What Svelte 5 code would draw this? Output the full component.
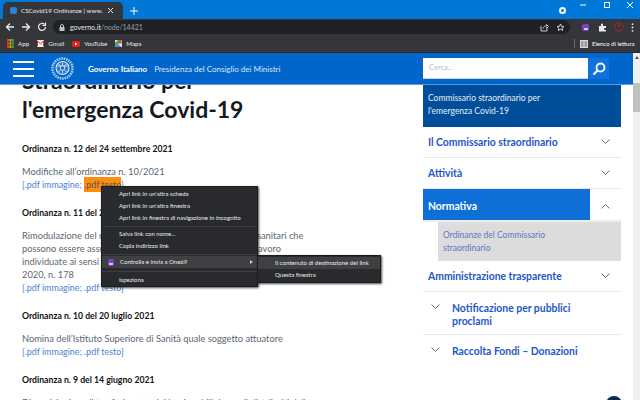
<script>
  const bookmarks = [
    { label: 'App', kind: 'apps' },
    { label: 'Gmail', kind: 'gmail' },
    { label: 'YouTube', kind: 'yt' },
    { label: 'Maps', kind: 'maps' }
  ];

  const orders = [
    {
      title: 'Ordinanza n. 12 del 24 settembre 2021',
      lines: ['Modifiche all\u2019ordinanza n. 10/2021'],
      highlight: true
    },
    {
      title: 'Ordinanza n. 11 del 2 agosto 2021',
      lines: [
        'Rimodulazione del numero massimo degli operatori socio-sanitari che',
        'possono essere assunti con contratti di somministrazione lavoro',
        'individuate ai sensi dell\u2019articolo 1 della legge 30 dicembre',
        '2020, n. 178'
      ]
    },
    {
      title: 'Ordinanza n. 10 del 20 luglio 2021',
      lines: ['Nomina dell\u2019Istituto Superiore di Sanità quale soggetto attuatore']
    },
    {
      title: 'Ordinanza n. 9 del 14 giugno 2021',
      lines: ['Disposizioni per il trasferimento dei beni mobili durevoli distribuiti dalla']
    }
  ];
</script>

<div class="window">
  <div class="tabstrip">
    <div class="tab">
      <span class="favicon"></span>
      <span class="tab-title">CSCovid19 Ordinanze | www.gov</span>
      <svg class="tab-x" width="7" height="7" viewBox="0 0 7 7"><path d="M1 1l5 5M6 1L1 6" stroke="#e8eaed" stroke-width="1" /></svg>
    </div>
    <svg class="newtab" width="8" height="8" viewBox="0 0 8 8"><path d="M4 0v8M0 4h8" stroke="#fff" stroke-width="1" /></svg>
    <div class="spacer"></div>
    <span class="record"></span>
    <div class="winctl">
      <svg width="10" height="10" viewBox="0 0 10 10"><path d="M1 5h6" stroke="#fff" /></svg>
      <svg width="10" height="10" viewBox="0 0 10 10"><rect x="2.500" y="2.500" width="5" height="5" fill="none" stroke="#fff" /></svg>
      <svg width="10" height="10" viewBox="0 0 10 10"><path d="M2 2l6 6M8 2l-6 6" stroke="#fff" /></svg>
    </div>
  </div>

  <div class="toolbar">
    <svg class="nav" width="10" height="10" viewBox="0 0 10 10"><path d="M9 5H1.500M5 1.500L1.500 5 5 8.500" fill="none" stroke="#e8eaed" stroke-width="1.300" /></svg>
    <svg class="nav" width="10" height="10" viewBox="0 0 10 10"><path d="M1 5h7.500M5 1.500L8.500 5 5 8.500" fill="none" stroke="#e8eaed" stroke-width="1.300" /></svg>
    <svg class="nav" width="10" height="10" viewBox="0 0 10 10"><path d="M8.500 5A3.500 3.500 0 1 1 7.500 2.500M8.500 0.500v3h-3" fill="none" stroke="#e8eaed" stroke-width="1.200" /></svg>
    <div class="omnibox">
      <svg width="6" height="7" viewBox="0 0 6 7"><rect x="0.500" y="3" width="5" height="4" fill="#bdc1c6" /><path d="M1.500 3V2a1.500 1.500 0 0 1 3 0v1" fill="none" stroke="#bdc1c6" /></svg>
      <span class="url"><b>governo.it</b>/node/14421</span>
      <div class="spacer"></div>
      <svg class="share" width="9" height="9" viewBox="0 0 9 9"><path d="M1 3v5h6V5.500M3 5.500C3.500 3.500 5 3 6.500 3V1.500L8.500 3.500 6.500 5.500V4.300" fill="none" stroke="#dadce0" stroke-width="0.900" /></svg>
      <svg width="9" height="9" viewBox="0 0 9 9"><path d="M4.500 1l1 2.300 2.500.2-1.900 1.600.6 2.400-2.200-1.300-2.200 1.300.6-2.400L1 3.500l2.500-.2z" fill="none" stroke="#dadce0" stroke-width="0.900" /></svg>
    </div>
    <span class="ext-one"><i></i></span>
    <svg width="9" height="9" viewBox="0 0 9 9"><path d="M1 3h2V1.500a1 1 0 0 1 2 0V3h3v2H7a1 1 0 0 0 0 2h1v1.500H1z" fill="#e8eaed" /></svg>
    <svg class="ring" width="10" height="10" viewBox="0 0 10 10"><circle cx="5" cy="5" r="4.200" fill="none" stroke="#a8242a" stroke-width="1" /><path d="M5 2.200V5" stroke="#c4363a" stroke-width="1" /></svg>
    <svg class="dots" width="3" height="9" viewBox="0 0 3 9"><circle cx="1.500" cy="1.200" r="0.900" fill="#e8eaed" /><circle cx="1.500" cy="4.500" r="0.900" fill="#e8eaed" /><circle cx="1.500" cy="7.800" r="0.900" fill="#e8eaed" /></svg>
  </div>

  <div class="bookmarks">
    {#each bookmarks as b}
      <span class="bookmark">
        {#if b.kind === 'apps'}
          <svg width="7" height="9" viewBox="0 0 7 9">
            <rect width="2" height="9" fill="#d9432f" />
            <rect x="2.500" width="2" height="9" fill="#e0a800" />
            <rect x="5" width="2" height="9" fill="#2f9e4f" />
            <path d="M0 3h7M0 6h7" stroke="#35363a" stroke-width="0.600" />
          </svg>
        {:else if b.kind === 'gmail'}
          <svg width="7" height="7" viewBox="0 0 7 7"><rect width="7" height="7" fill="#f1f1f1" /><path d="M.500 1v5.500M6.500 1v5.500M.500 1l3 2.800 3-2.800" fill="none" stroke="#d93025" /></svg>
        {:else if b.kind === 'yt'}
          <svg width="8" height="6" viewBox="0 0 8 6"><rect width="8" height="6" rx="1.600" fill="#e8201c" /><path d="M3 1.500v3L5.500 3z" fill="#fff" /></svg>
        {:else}
          <svg width="7" height="7" viewBox="0 0 7 7"><rect width="7" height="7" fill="#e9e4d8" /><path d="M0 7L7 0H3L0 3z" fill="#34a853" /><path d="M0 7l3-3 3 3z" fill="#4285f4" /><circle cx="5" cy="2" r="1.700" fill="#ea4335" /></svg>
        {/if}
        {b.label}
      </span>
    {/each}
    <div class="spacer"></div>
    <span class="bm-sep"></span>
    <span class="reading">
      <svg width="8" height="8" viewBox="0 0 8 8"><rect width="8" height="8" fill="#dadce0" /><path d="M1 2h2.500M1 4h2.500M1 6h2.500M4.500 2H7M4.500 4H7M4.500 6H7" stroke="#333" stroke-width="0.800" /></svg>
      Elenco di lettura
    </span>
  </div>

  <div class="page">
    <div class="site-head">
      <div class="burger"><i></i><i></i><i></i></div>
      <svg class="emblem" width="23" height="25" viewBox="0 0 23 25">
        <circle cx="11.500" cy="12.500" r="10" fill="none" stroke="#a9c8ee" stroke-width="2.600" stroke-dasharray="1.600 .8" />
        <circle cx="11.500" cy="12" r="6.500" fill="#2a78d2" stroke="#e3edf9" stroke-width="1.100" />
        <path d="M11.500 6.500v11M6 10h11M7.500 16l8-8M15.500 16l-8-8" stroke="#cfe0f5" stroke-width="0.900" />
        <circle cx="11.500" cy="12" r="2.200" fill="#1c69c6" stroke="#eef4fb" stroke-width="0.800" />
      </svg>
      <span class="gov"><b>Governo Italiano</b>Presidenza del Consiglio dei Ministri</span>
      <div class="spacer"></div>
      <div class="search">Cerca...</div>
      <div class="search-btn">
        <svg width="14" height="14" viewBox="0 0 14 14"><circle cx="8.500" cy="5.500" r="4" fill="none" stroke="#fff" stroke-width="1.800" /><path d="M5.500 8.500L1.500 12.500" stroke="#fff" stroke-width="2.200" /></svg>
      </div>
    </div>

    <div class="body">
      <main class="content">
        <h1>Straordinario per<br />l'emergenza Covid-19</h1>
        {#each orders as o}
          <section>
            <h2>{o.title}</h2>
            <p>
              {#each o.lines as line}{line}<br />{/each}
              <a href="#top">[.pdf immagine; <span class:hit={o.highlight}>.pdf testo</span>]</a>
            </p>
          </section>
        {/each}
      </main>

      <aside class="side">
        <div class="side-title">Commissario straordinario per<br />l'emergenza Covid-19</div>
        <div class="row"><span>Il Commissario straordinario</span><svg class="chev" width="9" height="6" viewBox="0 0 9 6"><path d="M.5.500l4 4 4-4" fill="none" stroke="#444" stroke-width=".8" /></svg></div>
        <div class="row"><span>Attività</span><svg class="chev" width="9" height="6" viewBox="0 0 9 6"><path d="M.5.500l4 4 4-4" fill="none" stroke="#444" stroke-width=".8" /></svg></div>
        <div class="row open"><span>Normativa</span><div class="open-chev"><svg width="9" height="6" viewBox="0 0 9 6"><path d="M.5 5.500l4-4 4 4" fill="none" stroke="#444" stroke-width=".8" /></svg></div></div>
        <div class="sub"><div>Ordinanze del Commissario straordinario</div></div>
        <div class="row"><span>Amministrazione trasparente</span><svg class="chev" width="9" height="6" viewBox="0 0 9 6"><path d="M.5.500l4 4 4-4" fill="none" stroke="#444" stroke-width=".8" /></svg></div>
        <div class="row left"><svg width="9" height="6" viewBox="0 0 9 6"><path d="M.5.500l4 4 4-4" fill="none" stroke="#444" stroke-width=".8" /></svg><span>Notificazione per pubblici<br />proclami</span></div>
        <div class="row left last"><svg width="9" height="6" viewBox="0 0 9 6"><path d="M.5.500l4 4 4-4" fill="none" stroke="#444" stroke-width=".8" /></svg><span>Raccolta Fondi – Donazioni</span></div>
      </aside>

      <div class="scrollbar"><span class="arrow"></span><span class="thumb"></span></div>
    </div>

    <span class="totop"></span>

    <div class="menu main-menu">
      <div class="item">Apri link in un'altra scheda</div>
      <div class="item">Apri link in un'altra finestra</div>
      <div class="item">Apri link in finestra di navigazione in incognito</div>
      <hr />
      <div class="item">Salva link con nome...</div>
      <div class="item">Copia indirizzo link</div>
      <hr />
      <div class="item active"><span class="ext-one small"><i></i></span>Controlla e invia a One69<span class="caret"></span></div>
      <hr class="wide" />
      <div class="item">Ispeziona</div>
    </div>
    <div class="menu sub-menu">
      <div class="item active">Il contenuto di destinazione del link</div>
      <div class="item">Questa finestra</div>
    </div>
  </div>
</div>

<style>
  :global(body) {
    margin: 0;
  }

  .window {
    width: 640px;
    height: 400px;
    display: flex;
    flex-direction: column;
    overflow: hidden;
    font-family: Lato, 'Liberation Sans', sans-serif;
    background: #fff;
    position: relative;
  }

  .spacer {
    flex: 1;
  }

  .tabstrip {
    height: 19px;
    flex: none;
    background: #0078d7;
    display: flex;
    align-items: flex-end;
    padding-left: 3px;
  }

  .tab {
    width: 120px;
    height: 17px;
    box-sizing: border-box;
    background: #35363a;
    border-radius: 5px 5px 0 0;
    display: flex;
    align-items: center;
    padding: 0 9px 0 7px;
    gap: 4px;
    color: #e8eaed;
    font-size: 6.300px;
  }

  .favicon {
    width: 7px;
    height: 7px;
    background: #2f7fd8;
    border-radius: 2px;
    flex: none;
  }

  .tab-title {
    flex: 1;
    white-space: nowrap;
    overflow: hidden;
  }

  .newtab {
    margin: 0 0 4px 7px;
  }

  .record {
    width: 7px;
    height: 7px;
    border-radius: 50%;
    background: #0078d7;
    border: 2px solid #f2f7fc;
    box-sizing: border-box;
    margin: 0 74px 5px 0;
  }

  .winctl {
    position: absolute;
    top: 0;
    right: 0;
    display: flex;
    gap: 13px;
    padding: 0 5px 0 0;
  }

  .toolbar {
    height: 16px;
    flex: none;
    background: #35363a;
    display: flex;
    align-items: center;
    padding: 0 0 0 5px;
    gap: 6px;
    position: relative;
  }

  .omnibox {
    width: 517px;
    height: 14px;
    border-radius: 7px;
    background: #202124;
    display: flex;
    align-items: center;
    padding: 0 5px 0 6px;
    box-sizing: border-box;
    gap: 5px;
    font-size: 7px;
    color: #9aa0a6;
    margin-right: 6px;
  }

  .share {
    margin-right: 2px;
  }

  .url b {
    color: #e8eaed;
    font-weight: 400;
  }

  .ext-one {
    width: 7px;
    height: 7px;
    border-radius: 2px;
    background: #7a44c8;
    margin-right: 3px;
    display: flex;
    align-items: flex-end;
    justify-content: center;
  }

  .ext-one i {
    display: block;
    width: 4px;
    height: 2px;
    background: #d5c3f0;
    margin-bottom: 1px;
  }

  .ext-one.small {
    width: 6px;
    height: 7px;
    margin: 0 6px 0 -11px;
  }

  .ring {
    margin-left: 1px;
  }

  .dots {
    margin-left: 1px;
  }

  .bookmarks {
    height: 18px;
    flex: none;
    background: #35363a;
    display: flex;
    align-items: center;
    padding-left: 7px;
    gap: 8px;
    color: #e8eaed;
    font-size: 6.300px;
    border-bottom: 1px solid #27282b;
    box-sizing: border-box;
  }

  .bookmark {
    display: flex;
    align-items: center;
    gap: 4px;
  }

  .bm-sep {
    width: 1px;
    height: 9px;
    background: #6a6b6e;
    margin-right: -3px;
  }

  .reading {
    display: flex;
    align-items: center;
    gap: 4px;
    width: 60px;
    color: #fff;
    font-size: 6px;
    white-space: nowrap;
  }

  .page {
    flex: 1;
    min-height: 0;
    position: relative;
    display: flex;
    flex-direction: column;
    overflow: hidden;
  }

  .site-head {
    height: 32px;
    flex: none;
    background: #0066cc;
    border-bottom: 1px solid #5c9ae0;
    box-sizing: border-box;
    display: flex;
    align-items: center;
    padding: 0 31px 0 13px;
    color: #fff;
    position: relative;
    z-index: 2;
  }

  .burger {
    width: 21px;
    display: flex;
    flex-direction: column;
    gap: 5px;
  }

  .burger i {
    display: block;
    height: 2px;
    background: #fff;
  }

  .emblem {
    margin-left: 17px;
  }

  .gov {
    margin-left: 14px;
    font-size: 8px;
    white-space: nowrap;
    color: #dbe8f8;
  }

  .gov b {
    margin-right: 7px;
    color: #fff;
  }

  .search {
    width: 165px;
    height: 21px;
    background: #fff;
    border-bottom: 1px solid #c5d8f0;
    box-sizing: border-box;
    color: #b6bcc2;
    font-size: 7.500px;
    line-height: 20px;
    padding-left: 6px;
  }

  .search-btn {
    width: 21px;
    height: 21px;
    background: #0f73dd;
    display: flex;
    align-items: center;
    justify-content: center;
  }

  .body {
    flex: 1;
    min-height: 0;
    display: flex;
  }

  .content {
    width: 401px;
    flex: none;
    margin-left: 22px;
    margin-top: -19px;
  }

  h1 {
    margin: 0 0 19px;
    font-size: 23px;
    line-height: 29px;
    font-weight: 700;
    color: #17191c;
    white-space: nowrap;
  }

  section {
    margin-bottom: 16px;
  }

  h2 {
    margin: 0 0 10px;
    font-size: 8.700px;
    line-height: 12px;
    font-weight: 700;
    color: #111;
  }

  p {
    margin: 0;
    font-size: 9.300px;
    line-height: 13px;
    color: #5a6772;
    white-space: nowrap;
  }

  a {
    color: #4d80d6;
    font-size: 8.900px;
    text-decoration: none;
  }

  .hit {
    background: #ff8c0a;
    color: #4a5a78;
    padding: 2px 0;
  }

  .side {
    width: 198px;
    flex: none;
    display: flex;
    flex-direction: column;
    font-size: 10.400px;
    font-weight: 700;
    color: #1f56c8;
  }

  .side-title {
    background: #004d99;
    color: #e6eef8;
    font-size: 8.500px;
    font-weight: 400;
    line-height: 13px;
    padding: 7px 5px 0;
    height: 42px;
    box-sizing: border-box;
    flex: none;
  }

  .row {
    border-bottom: 1px solid #e6e6e6;
    display: flex;
    align-items: center;
    justify-content: space-between;
    padding: 0 6px 0 5px;
    height: 31px;
    flex: none;
    box-sizing: border-box;
  }

  .row.open {
    padding-right: 0;
    color: #fff;
    height: 33px;
    border-bottom: 0;
    background: linear-gradient(90deg, #0f6fd8 167px, #fff 167px);
    box-shadow: inset 0 -2px 0 #eee;
  }

  .open-chev {
    width: 31px;
    display: flex;
    justify-content: center;
  }

  .chev {
    margin-right: 5px;
  }

  .sub {
    padding-left: 15px;
  }

  .sub div {
    background: #dcdcdc;
    color: #6275c0;
    font-size: 8.500px;
    font-weight: 400;
    line-height: 13px;
    padding: 7px 40px 7px 5px;
    height: 39px;
    box-sizing: border-box;
  }

  .row.left {
    justify-content: flex-start;
    gap: 12px;
    align-items: flex-start;
    padding: 10px 0 0 8px;
    height: 43px;
    line-height: 13px;
  }

  .row.left svg {
    margin-top: 2px;
    flex: none;
  }

  .row.left.last {
    border: 0;
  }

  .scrollbar {
    width: 7px;
    margin-left: 12px;
    background: #f1f1f1;
    margin-top: -32px;
    position: relative;
    z-index: 3;
    display: flex;
    flex-direction: column;
    align-items: center;
  }

  .arrow {
    width: 0;
    height: 0;
    border: 2px solid transparent;
    border-bottom: 3px solid #505050;
    border-top: 0;
    margin-top: 3px;
  }

  .thumb {
    width: 7px;
    height: 29px;
    background: #c1c1c1;
    margin-top: 24px;
  }

  .totop {
    position: absolute;
    left: 606px;
    top: 343px;
    width: 16px;
    height: 16px;
    border-radius: 50%;
    background: #0b2b4d;
  }

  .menu {
    position: absolute;
    z-index: 5;
    background: #292a2d;
    color: #e8eaed;
    font-size: 6.050px;
    box-shadow: 1px 1px 2px rgba(0, 0, 0, 0.7);
    border: 1px solid #1b1c1e;
    padding: 1px 0 0;
    box-sizing: border-box;
  }

  .main-menu {
    left: 101px;
    top: 133px;
    width: 157px;
    height: 101px;
  }

  .sub-menu {
    left: 257px;
    top: 202px;
    width: 124px;
    height: 28px;
  }

  .item {
    height: 12px;
    line-height: 12px;
    padding-left: 17px;
    white-space: nowrap;
    position: relative;
    display: flex;
    align-items: center;
  }

  .item.active {
    background: #3f4042;
  }

  hr {
    border: 0;
    border-top: 1px solid #3c3d40;
    margin: 2px 0 1px;
  }

  hr.wide {
    margin: 3px 0 2px;
  }

  .caret {
    position: absolute;
    right: 4px;
    top: 4px;
    border-left: 3px solid #c4c6c9;
    border-top: 2px solid transparent;
    border-bottom: 2px solid transparent;
  }
</style>
